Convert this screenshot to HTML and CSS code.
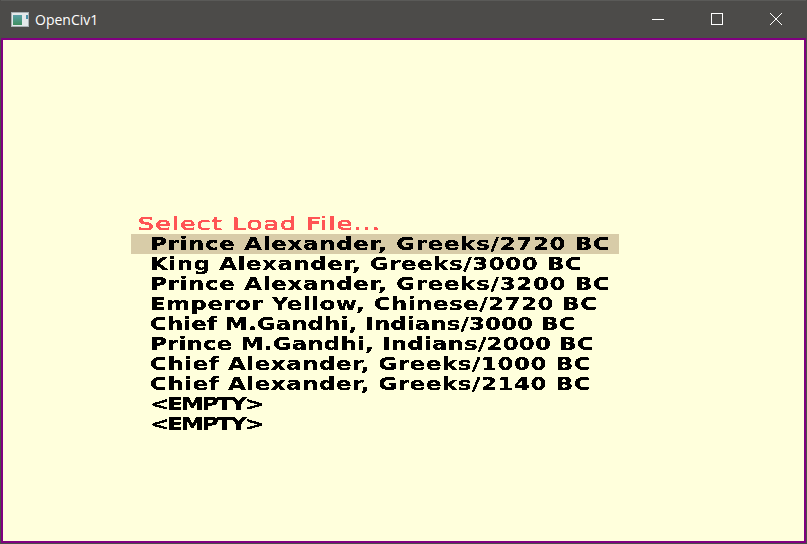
FILE: index.html
```html
<!DOCTYPE html>
<html lang="en">
<head>
<meta charset="utf-8">
<title>OpenCiv1</title>
<link rel="stylesheet" href="styles.css">
</head>
<body>
<svg class="defs" width="0" height="0" aria-hidden="true"><defs><linearGradient id="pane" x1="0" y1="0" x2="0" y2="1"><stop offset="0" stop-color="#5aa0a8"/><stop offset="1" stop-color="#3f8f5f"/></linearGradient></defs><filter id="crisp" x="0" y="-10%" width="100%" height="120%" color-interpolation-filters="sRGB"><feComponentTransfer><feFuncA type="discrete" tableValues="0 1 1"/></feComponentTransfer></filter></svg>
<header class="titlebar">
  <svg class="app-icon" width="18" height="15" viewBox="0 0 18 15"><rect x="0.5" y="0.5" width="17" height="14" fill="#e4e8ea" stroke="#a9b0b4"/><rect x="2" y="3" width="9" height="10" fill="url(#pane)"/><rect x="15" y="3" width="2" height="4" fill="#4a90a8"/></svg>
  <span class="app-title">OpenCiv1</span>
  <div class="controls">
    <button class="ctl"><svg width="12" height="12" viewBox="0 0 12 12"><path d="M0 6.5H12" stroke="#fff" stroke-width="1"/></svg></button>
    <button class="ctl"><svg width="12" height="12" viewBox="0 0 12 12"><rect x="0.5" y="0.5" width="11" height="11" fill="none" stroke="#fff"/></svg></button>
    <button class="ctl"><svg width="12" height="12" viewBox="0 0 12 12"><path d="M0 0L12 12M12 0L0 12" stroke="#fff" stroke-width="1"/></svg></button>
  </div>
</header>
<main class="screen">
  <div class="heading"><span class="stretch">Select Load File...</span></div>
  <ul class="files">
    <li class="file selected"><span class="stretch">Prince Alexander, Greeks/2720 BC</span></li>
    <li class="file"><span class="stretch">King Alexander, Greeks/3000 BC</span></li>
    <li class="file"><span class="stretch">Prince Alexander, Greeks/3200 BC</span></li>
    <li class="file"><span class="stretch">Emperor Yellow, Chinese/2720 BC</span></li>
    <li class="file"><span class="stretch">Chief M.Gandhi, Indians/3000 BC</span></li>
    <li class="file"><span class="stretch">Prince M.Gandhi, Indians/2000 BC</span></li>
    <li class="file"><span class="stretch">Chief Alexander, Greeks/1000 BC</span></li>
    <li class="file"><span class="stretch">Chief Alexander, Greeks/2140 BC</span></li>
    <li class="file"><span class="stretch">&lt;EMPTY&gt;</span></li>
    <li class="file"><span class="stretch">&lt;EMPTY&gt;</span></li>
  </ul>
</main>
</body>
</html>
```
FILE: styles.css
```css
* { box-sizing: border-box; }
html, body { margin: 0; height: 544px; overflow: hidden; }
body { display: flex; flex-direction: column; background: #4c4b49; padding: 0 1px 1px; font-family: "DejaVu Sans", sans-serif; }
.defs { position: absolute; }
.titlebar { height: 38px; flex: none; display: flex; align-items: center; padding: 0 1px 0 10px; color: #fff; border-top: 1px solid #5a5a58; }
.app-icon { flex: none; margin-right: 6px; margin-top: -1px; }
.app-title { font: 14px "Open Sans", sans-serif; margin-top: -1px; }
.controls { margin-left: auto; display: flex; height: 100%; }
.ctl { width: 59px; height: 100%; padding: 0 0 2px; background: none; border: 0; display: flex; align-items: center; justify-content: center; }
.screen { flex: 1; background: #ffffdc; border: 2px solid #800080; padding: 174px 0 0 128px; font-weight: 700; font-size: 18px; }
.stretch { display: block; width: max-content; height: 18px; line-height: 18px; transform: scaleX(1.27); transform-origin: 0 50%; filter: url(#crisp); }
.heading { color: #ff5555; height: 20px; padding: 1px 0 0 7px; font-weight: 400; }
.heading .stretch { transform: scaleX(1.4); letter-spacing: 0.85px; -webkit-text-stroke: 0.5px #ff5555; }
.files { list-style: none; margin: 0; padding: 0; width: 488px; }
.file { height: 20px; padding: 1px 0 0 19px; color: #000; white-space: nowrap; }
.file:nth-child(1) .stretch, .file:nth-child(3) .stretch { letter-spacing: 0.58px; }
.file:nth-child(2) .stretch { letter-spacing: 0.48px; }
.file:nth-child(4) .stretch { letter-spacing: 0.42px; }
.file:nth-child(5) .stretch { letter-spacing: 0.1px; }
.file:nth-child(6) .stretch { letter-spacing: 0.18px; }
.file:nth-child(7) .stretch, .file:nth-child(8) .stretch { letter-spacing: 0.48px; }
.file:nth-child(n+9) .stretch { letter-spacing: -1.5px; }
.selected { background: #d8cca8; }
```
